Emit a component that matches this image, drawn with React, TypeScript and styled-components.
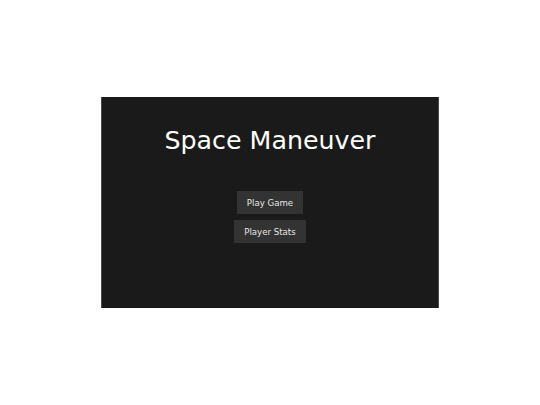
import styled, { createGlobalStyle } from "styled-components";

const Global = createGlobalStyle`
  html, body {
    margin: 0;
    padding: 0;
    background: #ffffff;
  }
  body {
    font-family: "DejaVu Sans", Verdana, sans-serif;
  }
`;

const Page = styled.div`
  width: 540px;
  height: 405px;
  display: flex;
  align-items: center;
  justify-content: center;
`;

const Screen = styled.main`
  box-sizing: border-box;
  width: 338px;
  height: 211px;
  background: #1a1a1a;
  border-left: 1px solid #4a4a4a;
  border-right: 1px solid #4a4a4a;
  display: flex;
  flex-direction: column;
  align-items: center;
  padding-top: 29px;
`;

const Title = styled.h1`
  margin: 0 0 35px;
  font-size: 25.3px;
  font-weight: normal;
  color: #ffffff;
  line-height: 30px;
`;

const Menu = styled.nav`
  display: flex;
  flex-direction: column;
  align-items: center;
  gap: 6px;
`;

const MenuButton = styled.button`
  border: none;
  background: #333333;
  color: #e6e6e6;
  font-family: "DejaVu Sans", Verdana, sans-serif;
  font-size: 8.6px;
  line-height: 10px;
  padding: 6.5px 10px;
  cursor: pointer;
  &:hover {
    background: #444444;
  }
`;

export default function App() {
  return (
    <>
      <Global />
      <Page>
        <Screen>
          <Title>Space Maneuver</Title>
          <Menu>
            <MenuButton>Play Game</MenuButton>
            <MenuButton>Player Stats</MenuButton>
          </Menu>
        </Screen>
      </Page>
    </>
  );
}
